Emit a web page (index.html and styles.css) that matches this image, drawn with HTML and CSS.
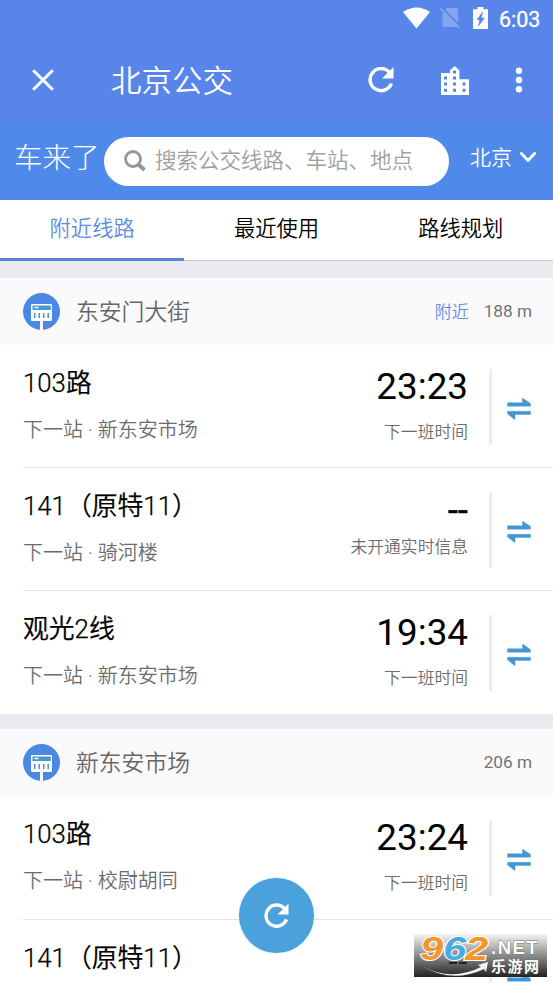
FILE: index.html
```html
<!DOCTYPE html>
<html lang="zh-CN">
<head>
<meta charset="utf-8">
<title>北京公交</title>
<link rel="stylesheet" href="styles.css">
</head>
<body>
<svg width="0" height="0" class="defs">
  <symbol id="swap" viewBox="0 0 24 22"><path d="M.5 4.700H15.500V0L23.500 5.500V8.200H.5zM23.500 13.300V16.500H8V21.700L.5 15.800V13.300z" fill="#4297d3" stroke="#4297d3" stroke-width=".4"/></symbol>
  <symbol id="stop" viewBox="0 0 37 37"><circle cx="18.5" cy="18.5" r="18.5" fill="#4d87e6"/><rect x="8" y="11" width="21" height="17" rx="1" fill="#fff"/><rect x="17" y="27" width="3" height="10" fill="#fff"/><path d="M9.5 12.5h18.300v4.500H9.500z" fill="#4597d3"/><path d="M11.500 14.500h4" stroke="#fff" stroke-width="1.500"/><path d="M11.700 20v5M16.200 20v5M20.700 20v5M25.200 20v5" stroke="#4a91d8" stroke-width="1.500"/></symbol>
  <symbol id="refresh" viewBox="0 0 26 26"><path d="M21.5 5.500A11 11 0 1 0 23.400 16.500" fill="none" stroke="#fff" stroke-width="3.500"/><path d="M25.500 0V11.500H14z" fill="#fff"/></symbol>
</svg>
<div class="screen">
  <header class="top">
    <div class="status">
      <svg class="wifi" width="27" height="22" viewBox="0 0 27 22"><path d="M0 5Q13.500-4 27 5L13.500 21.500z" fill="#fff"/></svg>
      <svg class="sim" width="20" height="22" viewBox="0 0 20 22"><path d="M7 1H16.500Q18 1 18 2.500V20H4Q2.500 20 2.500 18.500V6z" fill="#83a5f0"/><path d="M1.500 .5L20 19" stroke="#5885ea" stroke-width="2"/><path d="M.5 1.500L19.500 21" stroke="#83a5f0" stroke-width="1.700"/></svg>
      <svg class="battery" width="15" height="22" viewBox="0 0 15 22"><path d="M4.500 0h6v2.200H15V22H0V2.200h4.500z" fill="#fff"/><path d="M9.500 5L4 12.800h2.800L5.500 19l5.900-8H8.500z" fill="#5885ea" stroke="#5885ea" stroke-width=".5"/></svg>
      <span>6:03</span>
    </div>
    <div class="appbar">
      <svg class="close" width="22" height="22" viewBox="0 0 22 22"><path d="M1.200 1.200l19.600 19.600M20.800 1.200L1.200 20.800" stroke="#fff" stroke-width="3"/></svg>
      <h1>北京公交</h1>
      <svg class="reload" width="26" height="26"><use href="#refresh"/></svg>
      <svg class="city" width="28" height="29" viewBox="0 0 28 29"><path fill="#fff" fill-rule="evenodd" d="M0 7h9V4.200L13.700 0l4.700 4.200V13.200H28V29H0zM3 10.500v3h3v-3zM3 16.500v3h3v-3zM3 22.800v3h3v-3zM12 4.500v3h3v-3zM12 10.500v3h3v-3zM12 16.500v3h3v-3zM12 22.800v3h3v-3zM21.500 16.500v3h3v-3zM21.500 22.800v3h3v-3z"/></svg>
      <svg class="more" width="8" height="26" viewBox="0 0 8 26" fill="#fff"><circle cx="4" cy="3.700" r="3.200"/><circle cx="4" cy="13" r="3.200"/><circle cx="4" cy="22.200" r="3.200"/></svg>
    </div>
  </header>
  <div class="searchbar">
    <div class="brand">车来了</div>
    <div class="search">
      <svg width="23" height="23" viewBox="0 0 23 23" fill="none" stroke="#979797"><circle cx="9" cy="9" r="7.500" stroke-width="2.800"/><path d="M14.500 14.500L20.500 20" stroke-width="4"/></svg>
      <span>搜索公交线路、车站、地点</span>
    </div>
    <div class="where"><span>北京</span><svg width="18" height="12" viewBox="0 0 18 12"><path d="M1.500 1.500L9 9.500L16.500 1.500" fill="none" stroke="#fff" stroke-width="2.800"/></svg></div>
  </div>
  <nav class="tabs"><div class="tab active">附近线路</div><div class="tab">最近使用</div><div class="tab">路线规划</div></nav>

  <section class="station first">
    <div class="station-head"><svg width="37" height="37"><use href="#stop"/></svg><h2>东安门大街</h2><span class="near">附近</span><span class="dist">188 m</span></div>
    <div class="line">
      <div class="info"><div class="name">103路</div><div class="next">下一站 · 新东安市场</div></div>
      <div class="eta"><div class="time">23:23</div><div class="note">下一班时间</div></div>
      <div class="swap"><svg width="24" height="22"><use href="#swap"/></svg></div>
    </div>
    <div class="line">
      <div class="info"><div class="name">141（原特11）</div><div class="next">下一站 · 骑河楼</div></div>
      <div class="eta none"><div class="time">--</div><div class="note">未开通实时信息</div></div>
      <div class="swap"><svg width="24" height="22"><use href="#swap"/></svg></div>
    </div>
    <div class="line">
      <div class="info"><div class="name">观光2线</div><div class="next">下一站 · 新东安市场</div></div>
      <div class="eta"><div class="time">19:34</div><div class="note">下一班时间</div></div>
      <div class="swap"><svg width="24" height="22"><use href="#swap"/></svg></div>
    </div>
  </section>
  <section class="station">
    <div class="station-head"><svg width="37" height="37"><use href="#stop"/></svg><h2>新东安市场</h2><span class="dist">206 m</span></div>
    <div class="line">
      <div class="info"><div class="name">103路</div><div class="next">下一站 · 校尉胡同</div></div>
      <div class="eta"><div class="time">23:24</div><div class="note">下一班时间</div></div>
      <div class="swap"><svg width="24" height="22"><use href="#swap"/></svg></div>
    </div>
    <div class="line">
      <div class="info"><div class="name">141（原特11）</div></div>
      <div class="eta"></div>
      <div class="swap"><svg width="24" height="22"><use href="#swap"/></svg></div>
    </div>
  </section>
  <div class="fab"><svg width="25" height="26"><use href="#refresh"/></svg></div>
  <div class="mark">
    <svg class="swoosh" width="72" height="16" viewBox="0 0 72 16"><path d="M1 4Q30 20 60 5L57 3L67 0L65 10L63 7Q31 22 1 4z" fill="#f4f4f4"/><path d="M28 1h8M38 1h8" stroke="#222" stroke-width="2"/></svg>
    <div class="digits"><span>9</span><span class="six">6</span><span>2</span></div>
    <div class="words"><b class="net">.NET</b><b class="cn">乐游网</b></div>
  </div>
</div>
</body>
</html>
```
FILE: styles.css
```css
* { box-sizing: border-box; }
body { margin: 0; font-family: Roboto, "Noto Sans CJK SC", sans-serif; font-weight: 350; color: #000; background: #fff; }
h1, h2 { margin: 0; font-weight: inherit; }
svg { display: block; flex: none; }
.defs { position: absolute; }
.screen { position: relative; width: 553px; height: 983px; overflow: hidden; white-space: nowrap; }

.top { height: 123px; background: #5885ea; color: #fff; }
.status { display: flex; height: 38px; padding: 7px 12px 0 0; justify-content: flex-end; }
.status .sim { margin-left: 10px; }
.status .battery { margin-left: 13px; }
.status span { width: 42px; margin-left: 11px; font-size: 21.500px; line-height: 25px; font-weight: 400; -webkit-text-stroke: .3px #fff; }
.appbar { display: flex; align-items: center; height: 84px; padding-left: 32px; }
.appbar h1 { width: 257px; margin-left: 57px; padding-top: 3px; font-size: 30.500px; line-height: 44px; }
.appbar .city { margin-left: 47px; }
.appbar .more { margin-left: 46px; }

.searchbar { display: flex; height: 77px; padding-top: 14px; background: #4f8aeb; color: #fff; }
.brand { width: 90px; margin-left: 14px; padding-top: 1px; font-size: 28.500px; line-height: 41px; font-weight: 300; }
.search { display: flex; width: 345px; height: 49px; padding: 12px 0 0 20px; border-radius: 25px; background: #fff; color: #a0a0a0; }
.search span { margin-left: 8px; font-size: 21.500px; line-height: 23px; }
.search svg { margin-top: 1px; }
.where { display: flex; margin-left: 21px; font-size: 21px; line-height: 43px; }
.where svg { margin: 14px 0 0 7px; }

.tabs { display: flex; height: 61px; background: #fff; }
.tab { flex: 1; border-bottom: 1px solid #c8c8cc; font-size: 21.300px; line-height: 58px; text-align: center; }
.tab.active { border-bottom: 3px solid #5486db; color: #5b8de4; }

.station { border-top: 15px solid #ebeaf0; }
.station.first { border-top-width: 17px; }
.station-head { display: flex; align-items: center; height: 67px; padding: 0 21px 0 23px; background: #fafafd; color: #666; }
.station-head h2 { flex: 1; margin-left: 16px; padding-top: 2px; font-size: 22.800px; line-height: 33px; }
.near { margin-bottom: 2px; color: #6090e4; font-size: 17px; }
.dist { margin: 0 0 1px 15px; font-size: 17.200px; font-weight: 400; color: #737373; }

.line { display: flex; height: 123px; background: #fff; }
.first .station-head + .line { height: 122px; }
.first .line:last-child { height: 124px; }
.line + .line .info, .line + .line .eta, .line + .line .swap { border-top: 1px solid #e5e5e5; }
.info { flex: 1; margin-left: 23px; padding-top: 19px; }
.name { font-size: 25.800px; line-height: 38px; -webkit-text-stroke: .25px #000; }
.next { margin-top: 13px; font-size: 20px; line-height: 30px; color: #6d6d6d; }
.eta { width: 160px; padding: 20px 21px 0 0; text-align: right; }
.time { font-size: 36.800px; line-height: 44px; font-weight: 400; }
.note { margin-top: 10px; font-size: 16.800px; line-height: 26px; color: #6d6d6d; }
.eta.none { padding-top: 21px; }
.none .time { -webkit-text-stroke: .3px #000; }
.none .note { margin-top: 1px; }
.swap { width: 64px; padding-top: 24px; }
.swap svg { box-sizing: content-box; padding: 29px 0 25px 15px; border-left: 3px solid #ededed; }

.fab { position: absolute; left: 239px; top: 878px; display: flex; align-items: center; justify-content: center; width: 75px; height: 75px; border-radius: 50%; background: #4aa1dc; box-shadow: 0 0 2px #b5d9f0; }
.mark { position: absolute; left: 414px; top: 934px; display: flex; width: 133px; height: 43px; background: linear-gradient(#f6f6f6, #c0c0c0 25%, #777 60%, #222); }
.digits { position: relative; display: flex; width: 77px; padding-left: 9px; font: italic bold 33px/30px "Liberation Sans", sans-serif; color: #f5952c; -webkit-text-stroke: 2px #fff; paint-order: stroke fill; }
.digits span { width: 23px; transform: scaleX(1.25); }
.digits .six { color: #4aabe1; }
.words { display: flex; flex-direction: column; padding-top: 4px; color: #fff; }
.net { font: bold 18.500px/20px "Liberation Sans", sans-serif; letter-spacing: 1.500px; -webkit-text-stroke: 1px #777; paint-order: stroke fill; }
.cn { font-size: 15px; line-height: 18px; font-weight: 700; letter-spacing: 1.500px; }
.swoosh { position: absolute; left: 7px; top: 28px; }
```
